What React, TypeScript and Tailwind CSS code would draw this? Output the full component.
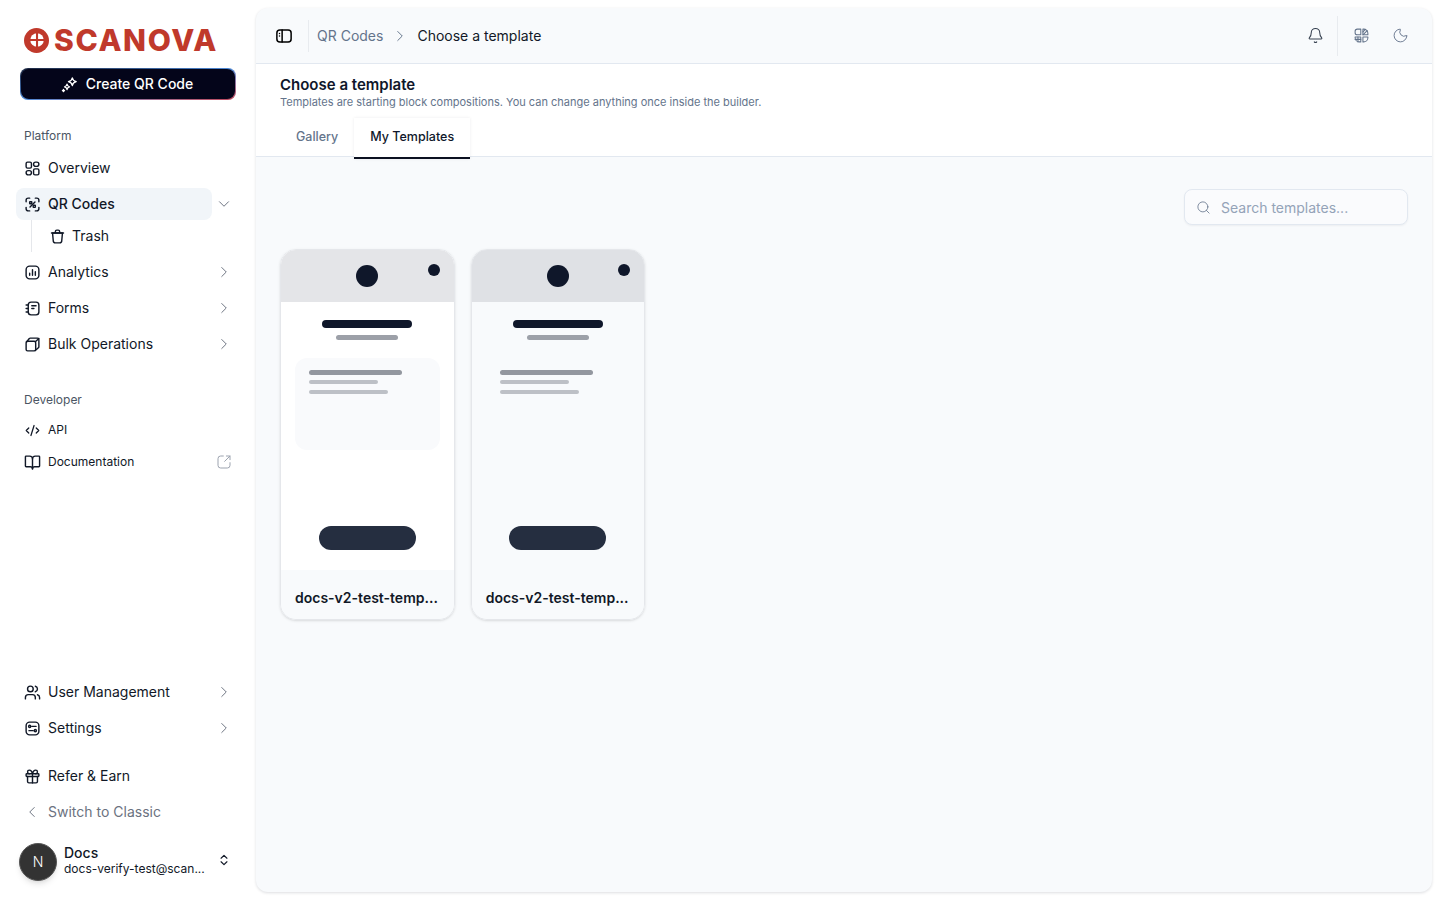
import type { ReactNode } from 'react'
import { Bell, BookOpen, ChevronDown, ChevronLeft, ChevronRight, ChevronsUpDown, Code2, Gift, Moon, Search, Users } from 'lucide-react'

const ic = { width: 17, height: 17, viewBox: '0 0 24 24', fill: 'none', stroke: 'currentColor', strokeWidth: 2, strokeLinecap: 'round' as const, strokeLinejoin: 'round' as const, className: 'shrink-0' }

function OverviewIcon() {
  return (
    <svg {...ic}>
      <rect x="3" y="3" width="7.5" height="8.5" rx="2" />
      <rect x="13.5" y="3" width="7.5" height="6" rx="3" />
      <rect x="3" y="15" width="7.5" height="6" rx="3" />
      <rect x="13.5" y="12.5" width="7.5" height="8.5" rx="2" />
    </svg>
  )
}

function QrIcon() {
  return (
    <svg {...ic}>
      <path d="M3 8V6a3 3 0 0 1 3-3h2M16 3h2a3 3 0 0 1 3 3v2M21 16v2a3 3 0 0 1-3 3h-2M8 21H6a3 3 0 0 1-3-3v-2" />
      <rect x="8" y="8" width="3" height="3" rx=".5" />
      <rect x="13" y="13" width="3" height="3" rx=".5" />
      <path d="M15.500 8.500 8.500 15.500" />
    </svg>
  )
}

function AnalyticsIcon() {
  return (
    <svg {...ic}>
      <rect x="3" y="3" width="18" height="18" rx="5" />
      <path d="M8 16v-3M12 16V8M16 16v-5" />
    </svg>
  )
}

function FormsIcon() {
  return (
    <svg {...ic}>
      <path d="M6 7a4 4 0 0 1 4-4h7a4 4 0 0 1 4 4v10a4 4 0 0 1-4 4h-7a4 4 0 0 1-4-4z" />
      <path d="M11 8h6M11 12h3M3 7h3M3 12h3M3 17h3" />
    </svg>
  )
}

function BulkIcon() {
  return (
    <svg {...ic}>
      <rect x="3" y="7.500" width="13.500" height="13.500" rx="2" />
      <path d="M3.600 8.500 7.500 3.600A2 2 0 0 1 9 3h10a2 2 0 0 1 2 2v10a2 2 0 0 1-.7 1.500l-4.400 4" />
      <path d="M16 8l5-4.500" />
    </svg>
  )
}

function SettingsIcon() {
  return (
    <svg {...ic}>
      <rect x="3" y="3" width="18" height="18" rx="5" />
      <path d="M11 9h6M7 15h6" />
      <circle cx="8" cy="9" r="1.500" />
      <circle cx="16" cy="15" r="1.500" />
    </svg>
  )
}

function TrashIcon() {
  return (
    <svg {...ic}>
      <path d="M5 7h14l-1 11a3 3 0 0 1-3 3H9a3 3 0 0 1-3-3z" />
      <path d="M3.500 7h17M9 7V5a2 2 0 0 1 2-2h2a2 2 0 0 1 2 2v2" />
    </svg>
  )
}

function ExternalIcon() {
  return (
    <svg {...ic} width={16} height={16} strokeWidth={1.500}>
      <path d="M11 3H7a4 4 0 0 0-4 4v10a4 4 0 0 0 4 4h10a4 4 0 0 0 4-4v-4" />
      <path d="M13 11l8-8M15.500 3H21v5.500" />
    </svg>
  )
}

function PanelIcon() {
  return (
    <svg {...ic} width={18} height={18}>
      <rect x="2.500" y="4" width="19" height="16" rx="4" />
      <path d="M9.500 4v16M6 8.500h.01M6 12h.01" />
    </svg>
  )
}

function GlobeGridIcon() {
  return (
    <svg {...ic} strokeWidth={1.500}>
      <path d="M11 3H6a3 3 0 0 0-3 3v2a3 3 0 0 0 3 3h5zM3 14v1a6 6 0 0 0 6 6h2v-7zM14 14h7v1a6 6 0 0 1-6 6h-1zM14 3h1a6 6 0 0 1 6 6v2h-7z" />
      <path d="M14 7l3.500-3.500M14 11l6-6M3 17.500h8M7 14v7" />
    </svg>
  )
}

function SparkIcon() {
  return (
    <svg width="17" height="17" viewBox="0 0 24 24" fill="none" stroke="white" strokeWidth="1.800" strokeLinejoin="round">
      <path d="M16 2.500c.5 3.200 2 4.800 5.500 5.500-3.500.7-5 2.300-5.500 5.500-.5-3.200-2-4.800-5.500-5.500 3.500-.7 5-2.300 5.500-5.500z" />
      <path d="M8.500 11.500c.4 2.300 1.400 3.300 3.500 3.800-2.100.5-3.100 1.500-3.500 3.800-.4-2.300-1.400-3.300-3.500-3.800 2.100-.5 3.100-1.500 3.500-3.800z" />
      <path d="M3.500 19c.2 1 .5 1.300 1.500 1.500-1 .2-1.300.5-1.500 1.500-.2-1-.5-1.300-1.500-1.500 1-.2 1.300-.5 1.500-1.500z" />
    </svg>
  )
}

function Logo() {
  return (
    <div className="flex h-[28px] items-center gap-[5px] pl-[4px] text-[#c0392b]">
      <svg width="25" height="25" viewBox="0 0 24 24" className="shrink-0">
        <circle cx="12" cy="12" r="12" fill="#c0392b" />
        <circle cx="12.500" cy="11.500" r="6.500" fill="white" />
        <path d="M12.500 4v15M5 11.500h15" stroke="#c0392b" strokeWidth="2" />
      </svg>
      <span className="text-[30px] leading-none font-extrabold tracking-[1.600px]">SCANOVA</span>
    </div>
  )
}

function NavRow({
  icon,
  label,
  chevron,
  active,
  small,
  trailing,
}: {
  icon: ReactNode
  label: string
  chevron?: 'right' | 'down'
  active?: boolean
  small?: boolean
  trailing?: ReactNode
}) {
  return (
    <div className="flex h-8 items-center">
      <div className={`flex h-8 w-[196px] items-center gap-2 rounded-lg pl-2 text-[#111827] ${active ? 'bg-[#f1f5f9] font-medium' : ''} ${small ? 'text-xs' : 'text-sm'}`}>
        <span className="flex w-4 justify-center">{icon}</span>
        <span>{label}</span>
      </div>
      <div className="flex w-6 justify-center text-[#6b7280]">
        {chevron === 'right' && <ChevronRight size={18} strokeWidth={1.300} />}
        {chevron === 'down' && <ChevronDown size={18} strokeWidth={1.300} />}
        {trailing}
      </div>
    </div>
  )
}

function Sidebar() {
  return (
    <aside className="flex h-full w-[256px] shrink-0 flex-col bg-white pt-[26px] pb-[18px] pl-[16px]">
      <div className="pl-[4px]">
        <Logo />
      </div>
      <div className="mt-[14px] ml-[4px] h-8 w-[216px] rounded-lg bg-gradient-to-br from-[#1c2740] via-[#4d8ad8] to-[#c0455a] p-px">
        <div className="flex h-full items-center justify-center gap-2 rounded-lg bg-[#04051a] pr-[2px] text-sm font-medium text-white">
          <SparkIcon />
          <span>Create QR Code</span>
        </div>
      </div>

      <p className="mt-[28px] pl-2 text-xs leading-4 text-[#4b5563]">Platform</p>
      <div className="mt-2 flex flex-col gap-1">
        <NavRow icon={<OverviewIcon />} label="Overview" />
        <div>
          <NavRow icon={<QrIcon />} label="QR Codes" chevron="down" active />
          <div className="ml-[15px] flex h-8 items-center gap-[6px] border-l border-[#e5e7eb] pl-[17px] text-sm text-[#111827]">
            <TrashIcon />
            <span>Trash</span>
          </div>
        </div>
        <NavRow icon={<AnalyticsIcon />} label="Analytics" chevron="right" />
        <NavRow icon={<FormsIcon />} label="Forms" chevron="right" />
        <NavRow icon={<BulkIcon />} label="Bulk Operations" chevron="right" />
      </div>

      <p className="mt-8 pl-2 text-xs leading-4 text-[#4b5563]">Developer</p>
      <div className="mt-[6px] flex flex-col">
        <NavRow icon={<Code2 size={15} strokeWidth={2} className="shrink-0" />} label="API" small />
        <NavRow
          icon={<BookOpen size={17} strokeWidth={2} className="shrink-0" />}
          label="Documentation"
          small
          trailing={<span className="text-[#9ca3af]"><ExternalIcon /></span>}
        />
      </div>

      <div className="mt-auto flex flex-col gap-1">
        <NavRow icon={<Users size={17} strokeWidth={2} className="shrink-0" />} label="User Management" chevron="right" />
        <NavRow icon={<SettingsIcon />} label="Settings" chevron="right" />
      </div>
      <div className="mt-4 flex flex-col gap-1">
        <NavRow icon={<Gift size={17} strokeWidth={2} className="shrink-0" />} label="Refer & Earn" />
        <div className="flex h-8 items-center gap-2 pl-2 text-sm text-[#6b7280]">
          <span className="flex w-4 justify-center"><ChevronLeft size={18} strokeWidth={1.300} className="shrink-0" /></span>
          <span>Switch to Classic</span>
        </div>
      </div>
      <div className="mt-[14px] flex h-10 items-center">
        <div className="ml-[3px] flex h-[38px] w-[38px] shrink-0 items-center justify-center rounded-full border border-[#555] bg-[#333] text-sm font-light text-white shadow-md">
          N
        </div>
        <div className="-mt-[3px] ml-[7px] w-[147px] shrink-0">
          <p className="text-sm leading-4 font-medium text-[#111827]">Docs</p>
          <p className="text-xs leading-4 whitespace-nowrap text-[#111827]">docs-verify-test@scan...</p>
        </div>
        <ChevronsUpDown size={14} strokeWidth={2} className="-mt-[4px] ml-[6px] text-[#111827]" />
      </div>
    </aside>
  )
}

function TemplateCard({ shaded }: { shaded?: boolean }) {
  return (
    <div className="overflow-hidden rounded-2xl border border-[#e5e7eb] shadow-sm">
      <div className={`relative flex h-[320px] flex-col ${shaded ? '' : 'bg-white'}`}>
        <div className={`flex h-[52px] shrink-0 items-center justify-center ${shaded ? 'bg-[#dfe1e5]' : 'bg-[#e4e5e8]'}`}>
          <div className="h-[22px] w-[22px] rounded-full bg-[#0f172a]" />
        </div>
        <div className="absolute top-[14px] right-[14px] h-3 w-3 rounded-full bg-[#0f172a]" />
        <div className="mx-auto mt-[18px] h-2 w-[90px] rounded-full bg-[#0f172a]" />
        <div className="mx-auto mt-[7px] h-[5px] w-[62px] rounded-full bg-[#9ca0a8]" />
        <div className={`mx-[14px] mt-[18px] flex h-[92px] flex-col items-start rounded-xl pt-[12px] pl-[14px] ${shaded ? '' : 'bg-[#f9fafc]'}`}>
          <div className="h-[5px] w-[93px] rounded-full bg-[#93979f]" />
          <div className="mt-[5px] h-1 w-[69px] rounded-full bg-[#bdc0c6]" />
          <div className="mt-[6px] h-1 w-[79px] rounded-full bg-[#bdc0c6]" />
        </div>
        <div className="mx-auto mt-[76px] h-6 w-[97px] rounded-full bg-[#252e40]" />
      </div>
      <div className="flex h-[49px] items-center bg-[#f8fafc] px-[14px] pt-[6px]">
        <p className="text-sm font-semibold whitespace-nowrap text-[#111827]">docs-v2-test-temp...</p>
      </div>
    </div>
  )
}

export default function App() {
  return (
    <div className="flex h-screen w-full overflow-hidden bg-white font-['Inter',sans-serif]">
      <Sidebar />
      <main className="my-2 mr-2 flex min-w-0 flex-1 flex-col overflow-hidden rounded-xl bg-[#f8fafc] shadow-[0_1px_3px_rgba(15,23,42,0.14)]">
        <header className="flex h-[56px] shrink-0 items-center border-b border-[#e2e8f0] pr-[23px] pl-[19px]">
          <PanelIcon />
          <div className="mr-2 ml-[15px] h-8 w-px bg-[#e8ebef]" />
          <span className="text-sm text-[#64748b]">QR Codes</span>
          <ChevronRight size={18} strokeWidth={1.300} className="mx-2 text-[#64748b]" />
          <span className="text-sm text-[#111827]">Choose a template</span>
          <div className="ml-auto flex items-center">
            <Bell size={17} strokeWidth={1.500} className="text-[#374151]" />
            <div className="mr-[15px] ml-[13px] h-10 w-px bg-[#e8ebef]" />
            <span className="text-[#64748b]"><GlobeGridIcon /></span>
            <Moon size={17} strokeWidth={1.300} className="ml-[22px] text-[#64748b]" />
          </div>
        </header>

        <section className="relative z-10 h-[93px] shrink-0 border-b border-[#e2e8f0] bg-white pt-[12px]">
          <h1 className="px-6 text-[15px] leading-[18px] font-semibold text-[#0f172a]">Choose a template</h1>
          <p className="mt-px px-6 text-[11px] leading-[14px] text-[#64748b]">Templates are starting block compositions. You can change anything once inside the builder.</p>
          <div className="mt-[9px] flex px-6">
            <div className="flex h-[41px] items-center border-b-2 border-transparent px-4 text-[12.500px] font-medium text-[#64748b]">Gallery</div>
            <div className="flex h-[41px] items-center border-b-2 border-[#0b1020] bg-white px-4 text-[12.500px] font-medium text-[#0f172a] shadow-[0_0_3px_rgba(15,23,42,0.08)]">My Templates</div>
          </div>
        </section>

        <div className="flex-1 px-6 pt-8">
          <div className="flex justify-end">
            <div className="flex h-9 w-[224px] items-center gap-2 rounded-lg border border-[#e2e8f0] bg-[#fafbfd] pl-[11px] shadow-[0_1px_2px_rgba(15,23,42,0.05)]">
              <Search size={15} strokeWidth={1.300} className="shrink-0 text-[#64748b]" />
              <input placeholder="Search templates..." className="w-full bg-transparent pt-px pl-[2px] text-sm outline-none placeholder:text-[#94a3b8]" />
            </div>
          </div>
          <div className="mt-6 grid grid-cols-6 gap-4">
            <TemplateCard />
            <TemplateCard shaded />
          </div>
        </div>
      </main>
    </div>
  )
}
